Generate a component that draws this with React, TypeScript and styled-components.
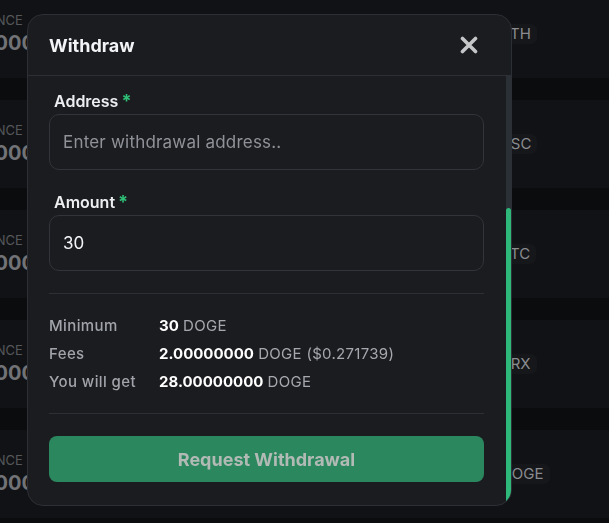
import { useLayoutEffect, useRef } from 'react'
import styled, { createGlobalStyle } from 'styled-components'

const GlobalStyle = createGlobalStyle`
  html, body {
    margin: 0;
    background: #0b0c0e;
    font-family: Inter, 'Noto Sans', sans-serif;
    overflow: hidden;
  }
  * {
    box-sizing: border-box;
  }
`

const networks = ['ETH', 'BSC', 'BTC', 'TRX', 'DOGE']

const infoRows = [
  { label: 'Minimum', value: '30', unit: 'DOGE' },
  { label: 'Fees', value: '2.00000000', unit: 'DOGE ($0.271739)' },
  { label: 'You will get', value: '28.00000000', unit: 'DOGE' },
]

export default function App() {
  const scrollRef = useRef<HTMLDivElement>(null)

  useLayoutEffect(() => {
    if (scrollRef.current) {
      scrollRef.current.scrollTop = scrollRef.current.scrollHeight
    }
  }, [])

  return (
    <>
      <GlobalStyle />
      <WalletList>
        {networks.map(network => (
          <WalletCard key={network}>
            <Balance>
              <BalanceLabel>Balance</BalanceLabel>
              <BalanceValue>0.00000000</BalanceValue>
            </Balance>
            <NetworkPill>{network}</NetworkPill>
          </WalletCard>
        ))}
      </WalletList>

      <Modal role='dialog'>
        <ModalHeader>
          <ModalTitle>Withdraw</ModalTitle>
          <CloseButton aria-label='Close'>
            <svg width='18' height='18' viewBox='0 0 18 18'>
              <path
                d='M2.5 2.5 L15.5 15.5 M15.5 2.5 L2.5 15.5'
                stroke='#c5c6c8'
                strokeWidth='3.6'
                strokeLinecap='round'
              />
            </svg>
          </CloseButton>
        </ModalHeader>

        <ModalBody>
          <ScrollArea ref={scrollRef}>
            <Field>
              <FieldLabel>
                Currency<Required>*</Required>
              </FieldLabel>
              <TextInput readOnly value='DOGE' />
            </Field>
            <Field>
              <FieldLabel>
                Network<Required>*</Required>
              </FieldLabel>
              <TextInput readOnly value='Dogecoin' />
            </Field>
            <Field>
              <FieldLabel>
                Address<Required>*</Required>
              </FieldLabel>
              <TextInput placeholder='Enter withdrawal address..' />
            </Field>
            <Field>
              <FieldLabel>
                Amount<Required>*</Required>
              </FieldLabel>
              <TextInput defaultValue='30' />
            </Field>

            <Divider />

            <InfoList>
              {infoRows.map(row => (
                <InfoRow key={row.label}>
                  <InfoLabel>{row.label}</InfoLabel>
                  <span>
                    <InfoValue>{row.value}</InfoValue> <InfoUnit>{row.unit}</InfoUnit>
                  </span>
                </InfoRow>
              ))}
            </InfoList>

            <Divider />

            <SubmitButton>Request Withdrawal</SubmitButton>
          </ScrollArea>

          <ScrollTrack>
            <ScrollThumb />
          </ScrollTrack>
        </ModalBody>
      </Modal>
    </>
  )
}

const WalletList = styled.div`
  display: flex;
  flex-direction: column;
  gap: 22px;
  margin-top: -10px;
`

const WalletCard = styled.div`
  height: 88px;
  background: #111215;
  display: grid;
  grid-template-columns: 495px auto;
  align-items: center;
`

const Balance = styled.div`
  display: flex;
  flex-direction: column;
  gap: 2px;
  margin-left: -38px;
`

const BalanceLabel = styled.span`
  font-size: 13px;
  line-height: 16px;
  text-transform: uppercase;
  color: #55575b;
`

const BalanceValue = styled.span`
  font-size: 20px;
  line-height: 26px;
  font-weight: 700;
  color: #717377;
`

const NetworkPill = styled.span`
  justify-self: start;
  padding: 1px 6px;
  border-radius: 6px;
  background: #16171a;
  color: #8a8c90;
  font-size: 15px;
  line-height: 18px;
`

const Modal = styled.div`
  position: fixed;
  left: 27px;
  top: 14px;
  width: 485px;
  height: 492px;
  display: flex;
  flex-direction: column;
  background: #1b1c20;
  border: 1px solid #2c2f35;
  border-radius: 16px;
  overflow: hidden;
`

const ModalHeader = styled.div`
  height: 61px;
  flex-shrink: 0;
  display: flex;
  align-items: center;
  justify-content: space-between;
  padding: 0 24px 0 21px;
  border-bottom: 1px solid #2c2f35;
`

const ModalTitle = styled.h2`
  margin: 0;
  font-size: 18px;
  font-weight: 700;
  color: #f3f4f6;
`

const CloseButton = styled.button`
  all: unset;
  width: 36px;
  height: 36px;
  display: flex;
  align-items: center;
  justify-content: center;
  cursor: pointer;
`

const ModalBody = styled.div`
  flex: 1;
  min-height: 0;
  display: flex;
`

const ScrollArea = styled.div`
  flex: 1;
  overflow: hidden;
  display: flex;
  flex-direction: column;
  gap: 22px;
  padding: 8px 22px 23px 21px;
`

const ScrollTrack = styled.div`
  width: 5px;
  flex-shrink: 0;
  display: flex;
  flex-direction: column;
  background: #2b3036;
`

const ScrollThumb = styled.div`
  margin-top: auto;
  height: 297px;
  border-radius: 3px 3px 0 0;
  background: #2eb97a;
`

const Field = styled.div`
  display: flex;
  flex-direction: column;
  gap: 3px;
  flex-shrink: 0;
`

const FieldLabel = styled.label`
  padding-left: 5px;
  font-size: 16px;
  line-height: 20px;
  font-weight: 600;
  color: #eceef0;
`

const Required = styled.span`
  margin-left: 3px;
  font-size: 18px;
  font-weight: 700;
  color: #2fbf77;
`

const TextInput = styled.input`
  height: 56px;
  width: 100%;
  padding: 0 13px;
  border: 1px solid #31343a;
  border-radius: 10px;
  background: #1b1c20;
  color: #f3f4f6;
  font-family: inherit;
  font-size: 17px;
  outline: none;

  &::placeholder {
    color: #8f9298;
    letter-spacing: 0.2px;
  }
`

const Divider = styled.hr`
  margin: 0;
  border: none;
  border-top: 1px solid #2c2f35;
  flex-shrink: 0;
`

const InfoList = styled.div`
  display: flex;
  flex-direction: column;
  margin: -4px 0 -5px;
  flex-shrink: 0;
`

const InfoRow = styled.div`
  display: grid;
  grid-template-columns: 110px 1fr;
  font-size: 15px;
  line-height: 28px;
`

const InfoLabel = styled.span`
  font-weight: 500;
  letter-spacing: 0.4px;
  color: #a1a4aa;
`

const InfoValue = styled.b`
  font-weight: 700;
  color: #ffffff;
`

const InfoUnit = styled.span`
  letter-spacing: 0.3px;
  color: #a5a8ae;
`

const SubmitButton = styled.button`
  height: 46px;
  flex-shrink: 0;
  border: none;
  border-radius: 8px;
  background: #2b875e;
  color: #b2bab6;
  font-family: inherit;
  font-size: 18px;
  font-weight: 700;
  cursor: pointer;
`
